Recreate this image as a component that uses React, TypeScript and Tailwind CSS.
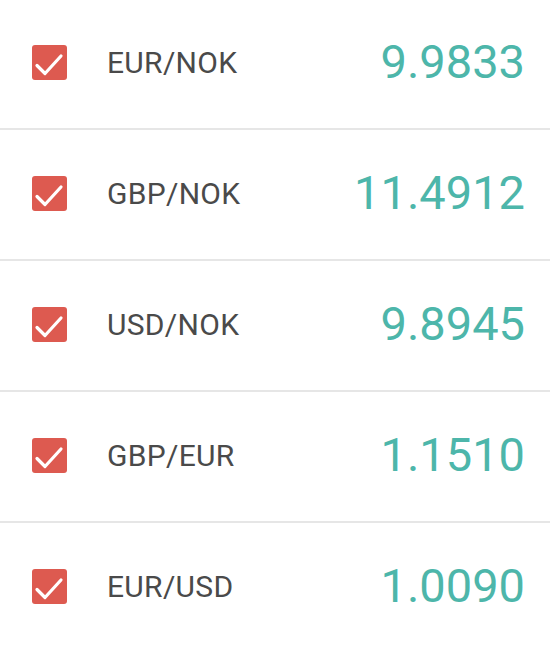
import React from 'react';

const rates = [
  { pair: 'EUR/NOK', value: '9.9833' },
  { pair: 'GBP/NOK', value: '11.4912' },
  { pair: 'USD/NOK', value: '9.8945' },
  { pair: 'GBP/EUR', value: '1.1510' },
  { pair: 'EUR/USD', value: '1.0090' },
];

function Check() {
  return (
    <div className="w-[35px] h-[35px] rounded-[3px] bg-[#dd5a50] shrink-0">
      <svg width="35" height="35" viewBox="0 0 35 35" fill="none">
        <path d="M5 20.5l8 8L29 11" stroke="white" strokeWidth="3.2" strokeLinecap="round" strokeLinejoin="round" />
      </svg>
    </div>
  );
}

export default function App() {
  return (
    <div className="w-[550px] h-[650px] bg-white overflow-hidden" style={{ fontFamily: 'Roboto, sans-serif' }}>
      <div className="-mt-[1px]">
        {rates.map((r) => (
          <div key={r.pair} className="h-[131px] flex items-center pl-[32px] pr-[25px] pb-[2px] border-b-2 border-[#e6e6e6]">
            <Check />
            <span className="ml-[40px] text-[30px] tracking-[0.3px] text-[#4a4a4a]">{r.pair}</span>
            <span className="ml-auto text-[47px] text-[#4db6aa]">{r.value}</span>
          </div>
        ))}
      </div>
    </div>
  );
}
